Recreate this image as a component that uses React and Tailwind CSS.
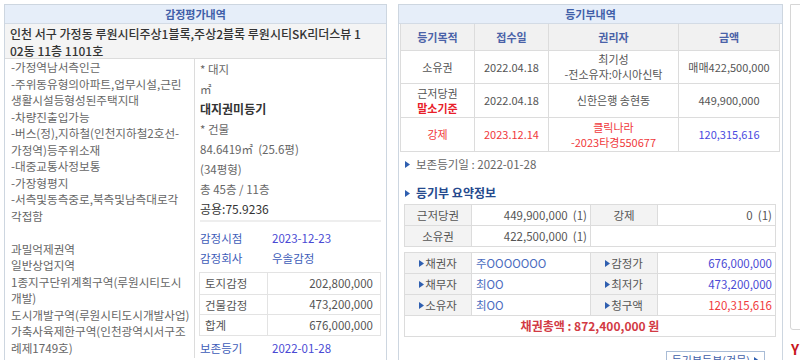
import React from "react";

const leftLines = [
  "-가정역남서측인근",
  "-주위동유형의아파트,업무시설,근린",
  "생활시설등형성된주택지대",
  "-차량진출입가능",
  "-버스(정),지하철(인천지하철2호선-",
  "가정역)등주위소재",
  "-대중교통사정보통",
  "-가장형평지",
  "-서측및동측중로,북측및남측대로각",
  "각접함",
  "",
  "과밀억제권역",
  "일반상업지역",
  "1종지구단위계획구역(루원시티도시",
  "개발)",
  "도시개발구역(루원시티도시개발사업)",
  "가축사육제한구역(인천광역시서구조",
  "례제1749호)",
];

const appraisal = [
  ["토지감정", "202,800,000"],
  ["건물감정", "473,200,000"],
  ["합계", "676,000,000"],
];

function Tri({ className = "" }) {
  return (
    <svg width="5" height="7" viewBox="0 0 5 7" className={"inline-block shrink-0 " + className}>
      <path d="M0 0 L5 3.5 L0 7 Z" fill="#2f5fb0" />
    </svg>
  );
}

export default function App() {
  return (
    <div className="h-[360px] w-[800px] overflow-hidden bg-white font-['Noto_Sans_CJK_KR',sans-serif] text-[11px] text-[#666]">
      <div className="flex pl-[4px] pt-[4px]">
        {/* 감정평가내역 */}
        <div className="w-[383px] shrink-0 border border-[#cdd6e0] h-[400px]">
          <div className="h-[19px] bg-[#e6eef9] border-b border-[#d3dbe5] text-center text-[11px] font-bold leading-[19px] text-[#3f5ea8]">
            감정평가내역
          </div>
          <div className="h-[35px] bg-[#f4f4f4] border-b border-[#dcdcdc] px-[5px] pt-[1px] text-[12px] font-medium leading-[17px] text-[#333]">
            <div>인천 서구 가정동 루원시티주상1블록,주상2블록 루원시티SK리더스뷰 1</div>
            <div>02동 11층 1101호</div>
          </div>
          <div className="flex">
            <div className="w-[190px] shrink-0 border-r border-[#dcdcdc] px-[6px] text-[11.6px] leading-[16.5px]">
              {leftLines.map((l, i) => (
                <div key={i} className="h-[16.5px] whitespace-nowrap">{l}</div>
              ))}
            </div>
            <div className="flex-1 leading-[20px]">
              <div className="px-[5px] text-[11.5px]">
                <div>* 대지</div>
                <div>㎡</div>
                <div className="font-bold text-[12px] text-[#333]">대지권미등기</div>
                <div>* 건물</div>
                <div>84.6419㎡ &nbsp;(25.6평)</div>
                <div>(34평형)</div>
                <div>총 45층 / 11층</div>
                <div className="text-[#333] text-[12px]">공용:75.9236</div>
              </div>
              <div className="mx-[5px] mt-[1px] border-t-2 border-[#eeeeee]" />
              <div className="mt-[6px] flex px-[5px] text-[11.5px] text-[#3d5cb8]">
                <div className="w-[72px]">감정시점</div>
                <div className="text-[#4a4ad4]">2023-12-23</div>
              </div>
              <div className="flex px-[5px] text-[11.5px] text-[#3d5cb8]">
                <div className="w-[72px]">감정회사</div>
                <div>우솔감정</div>
              </div>
              <div className="ml-[4px] mr-[5px] mt-[4px] border border-[#e3e3e3] text-[#555] text-[11.5px]">
                {appraisal.map(([k, v], i) => (
                  <div key={k} className={"flex h-[20.5px] items-center leading-[20px] " + (i > 0 ? "border-t border-[#e3e3e3]" : "")}>
                    <div className="w-[68px] h-full border-r border-[#e3e3e3] pl-[5px]">{k}</div>
                    <div className="flex-1 pr-[7px] text-right">{v}</div>
                  </div>
                ))}
              </div>
              <div className="mt-[2px] flex px-[5px] text-[11.5px] text-[#3d5cb8]">
                <div className="w-[72px]">보존등기</div>
                <div className="text-[#4a4ad4]">2022-01-28</div>
              </div>
            </div>
          </div>
        </div>

        {/* 등기부내역 */}
        <div className="ml-[11px] w-[385px] shrink-0 border border-[#cdd6e0] h-[400px]">
          <div className="h-[19px] bg-[#e6eef9] border-b border-[#d3dbe5] text-center text-[11px] font-bold leading-[19px] text-[#3f5ea8]">
            등기부내역
          </div>
          <div className="ml-[1px] mr-[2px] border-x border-b border-[#dcdcdc] text-[11px] text-[#555] text-center">
            <div className="grid h-[27px] grid-cols-[74px_74px_130px_1fr] bg-[#f1f1f1] font-bold text-[#4a62a8] items-stretch border-b border-[#dcdcdc]">
              <div className="flex items-center justify-center border-r border-[#dcdcdc]">등기목적</div>
              <div className="flex items-center justify-center border-r border-[#dcdcdc]">접수일</div>
              <div className="flex items-center justify-center border-r border-[#dcdcdc]">권리자</div>
              <div className="flex items-center justify-center">금액</div>
            </div>
            <div className="grid h-[33px] grid-cols-[74px_74px_130px_1fr] border-b border-[#dcdcdc] leading-[15px]">
              <div className="flex items-center justify-center border-r border-[#dcdcdc]">소유권</div>
              <div className="flex items-center justify-center border-r border-[#dcdcdc]">2022.04.18</div>
              <div className="flex flex-col items-center justify-center border-r border-[#dcdcdc]">
                <div>최기성</div>
                <div>-전소유자:아시아신탁</div>
              </div>
              <div className="flex items-center justify-center">매매422,500,000</div>
            </div>
            <div className="grid h-[34px] grid-cols-[74px_74px_130px_1fr] border-b border-[#dcdcdc] leading-[15px]">
              <div className="flex flex-col items-center justify-center border-r border-[#dcdcdc]">
                <div>근저당권</div>
                <div className="font-bold text-[#e8202a]">말소기준</div>
              </div>
              <div className="flex items-center justify-center border-r border-[#dcdcdc]">2022.04.18</div>
              <div className="flex items-center justify-center border-r border-[#dcdcdc]">신한은행 송현동</div>
              <div className="flex items-center justify-center">449,900,000</div>
            </div>
            <div className="grid h-[33px] grid-cols-[74px_74px_130px_1fr] leading-[15px] text-[#f0393c]">
              <div className="flex items-center justify-center border-r border-[#dcdcdc]">강제</div>
              <div className="flex items-center justify-center border-r border-[#dcdcdc]">2023.12.14</div>
              <div className="flex flex-col items-center justify-center border-r border-[#dcdcdc]">
                <div>클릭나라</div>
                <div>-2023타경550677</div>
              </div>
              <div className="flex items-center justify-center text-[#4a4ae0]">120,315,616</div>
            </div>
          </div>

          <div className="mt-[4px] flex items-center gap-[6px] pl-[6px] h-[17px] text-[11.5px]">
            <Tri />
            <span>보존등기일 : 2022-01-28</span>
          </div>
          <div className="mt-[11px] flex items-center gap-[6px] pl-[6px] h-[18px] text-[12px] font-bold text-[#254a8e]">
            <Tri />
            <span>등기부 요약정보</span>
          </div>

          <div className="mx-[5px] mt-[2px] w-[372px] border border-[#dcdcdc] text-[#555] text-[11.5px]">
            <div className="grid h-[21px] grid-cols-[67px_119px_67px_1fr] border-b border-[#dcdcdc] leading-[20px]">
              <div className="bg-[#f3f3f3] border-r border-[#dcdcdc] text-center">근저당권</div>
              <div className="border-r border-[#dcdcdc] pr-[3px] text-right">449,900,000 &nbsp;(1)</div>
              <div className="bg-[#f3f3f3] border-r border-[#dcdcdc] text-center">강제</div>
              <div className="pr-[3px] text-right">0 &nbsp;(1)</div>
            </div>
            <div className="grid h-[20px] grid-cols-[67px_119px_1fr] leading-[20px]">
              <div className="bg-[#f3f3f3] border-r border-[#dcdcdc] text-center">소유권</div>
              <div className="border-r border-[#dcdcdc] pr-[3px] text-right">422,500,000 &nbsp;(1)</div>
              <div />
            </div>
          </div>

          <div className="mx-[5px] mt-[5px] w-[372px] border border-[#dcdcdc] text-[#555] text-[11.5px]">
            {[
              ["채권자", "주OOOOOOO", "감정가", "676,000,000", "text-[#4a4ad4]"],
              ["채무자", "최OO", "최저가", "473,200,000", "text-[#4a4ad4]"],
              ["소유자", "최OO", "청구액", "120,315,616", "text-[#f0393c]"],
            ].map(([a, b, c, d, cls]) => (
              <div key={a} className="grid h-[21px] grid-cols-[67px_119px_67px_1fr] border-b border-[#dcdcdc] leading-[20px]">
                <div className="flex items-center justify-center gap-[1px] bg-[#f3f3f3] border-r border-[#dcdcdc]">
                  <Tri />
                  <span>{a}</span>
                </div>
                <div className="border-r border-[#dcdcdc] pl-[4px] text-[#4b6cc0]">{b}</div>
                <div className="flex items-center justify-center gap-[1px] bg-[#f3f3f3] border-r border-[#dcdcdc]">
                  <Tri />
                  <span>{c}</span>
                </div>
                <div className={"pr-[3px] text-right " + cls}>{d}</div>
              </div>
            ))}
            <div className="h-[20px] text-center text-[12px] font-bold leading-[20px] text-[#d23a44]">
              채권총액 : 872,400,000 원
            </div>
          </div>

          <div className="mt-[14px] flex justify-end pr-[17px]">
            <div className="flex h-[18px] items-center gap-[4px] border border-[#a9bcd6] px-[5px] text-[11px] leading-[16px] text-[#3f5ea8]">
              <span>등기부등본(건물)</span>
              <Tri />
            </div>
          </div>
        </div>

        {/* side sliver */}
        <div className="ml-[7px] flex flex-col">
          <div className="h-[326px] w-[20px] rounded-bl-[3px] border border-[#d6d6d6]" />
          <div className="mt-[12px] pl-[1px] text-[14px] font-bold leading-[14px] text-[#c8161d]">Y</div>
        </div>
      </div>
    </div>
  );
}
